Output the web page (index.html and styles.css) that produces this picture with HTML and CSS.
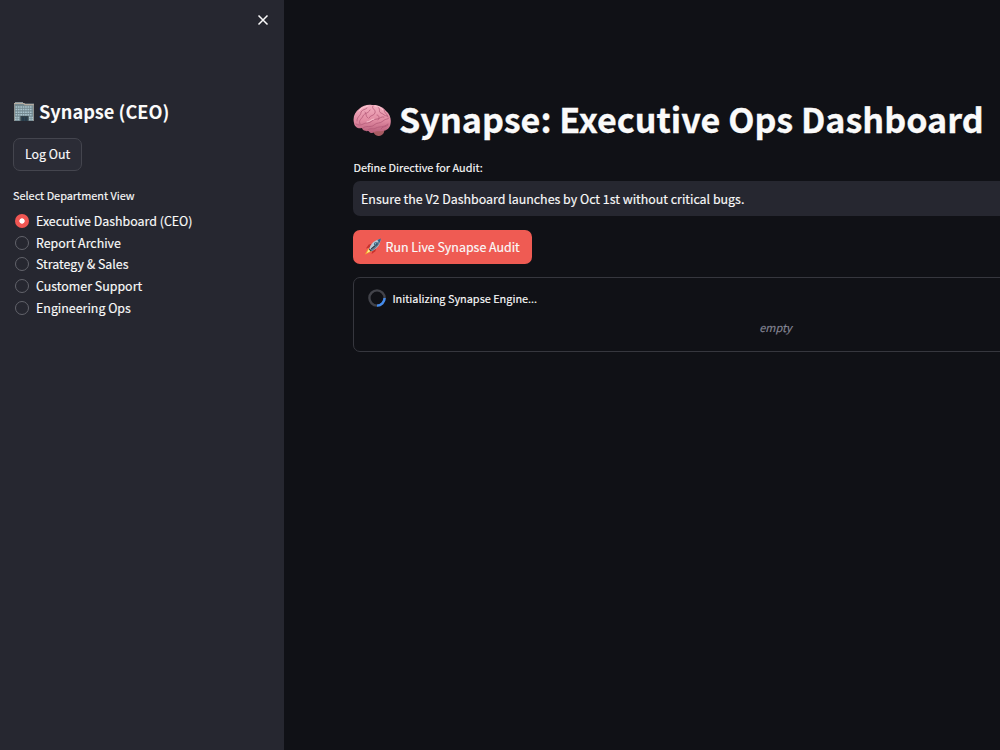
FILE: index.html
```html
<!DOCTYPE html>
<html lang="en">
<head>
<meta charset="utf-8">
<title>Synapse: Executive Ops Dashboard</title>
<link rel="stylesheet" href="styles.css">
</head>
<body>
<div class="app">
  <aside class="sidebar">
    <div class="sidebar-top">
      <svg class="close" viewBox="0 0 12 12"><path d="M1.5 1.5l9 9M10.5 1.5l-9 9"/></svg>
    </div>
    <h2 class="brand">
      <svg class="building" viewBox="0 0 20 20">
        <path d="M1 1h8v3H1z" fill="#88959a"/>
        <path d="M0 2.5h20V20H0z" fill="#748990"/>
        <path d="M0 2.5h10l1 1.2h9" fill="none" stroke="#b5aca1" stroke-width="1.2"/>
        <path d="M1.5 6h17M1.5 8.6h17M1.5 11.2h17M1.5 13.8h17M1 16.4h5M15 16.4h4M1 18.5h5M15 18.5h4" stroke="#a9c3cc" stroke-width="1.5" stroke-dasharray="1.7 .7"/>
        <path d="M6.5 15h8v5h-8z" fill="#34434b"/>
        <path d="M8.2 16.2h1.8V20H8.2zM11 16.2h1.8V20H11z" fill="#253b4b"/>
        <path d="M.4 3v17M19.6 3.5V20" stroke="#9b968e" stroke-width=".8"/>
      </svg>
      <span class="brand-text">Synapse (CEO)</span>
    </h2>
    <button class="btn logout"><span>Log Out</span></button>
    <div class="label view-label"><span class="view-text">Select Department View</span></div>
    <ul class="radios">
      <li class="radio"><i class="dot on"></i><span>Executive Dashboard (CEO)</span></li>
      <li class="radio"><i class="dot"></i><span>Report Archive</span></li>
      <li class="radio"><i class="dot"></i><span>Strategy &amp; Sales</span></li>
      <li class="radio"><i class="dot"></i><span>Customer Support</span></li>
      <li class="radio"><i class="dot"></i><span>Engineering Ops</span></li>
    </ul>
  </aside>
  <main class="main">
    <h1 class="title">
      <svg class="brain" viewBox="0 0 38 33">
        <defs>
          <linearGradient id="pink" x1="0" y1="0" x2="0" y2="1"><stop offset="0" stop-color="#f3afc0"/><stop offset=".55" stop-color="#e18ba2"/><stop offset="1" stop-color="#b95f7b"/></linearGradient>
        </defs>
        <path d="M21 25c2-2 9-2 10 .5 1 3-1.500 6-5 6.500-4 .3-7-4-5-7z" fill="#a85b62"/>
        <path d="M1 19C-.5 13 2 8 6 5 10 1 15 .5 19 1c6-.5 11 2 14 6 4 3 5.500 8 4.500 13-.5 4-4 7-8 7-3 1-6-.5-8 1-2 2-5 1-6-1-4 .5-6-1-6.500-3C5 25 1.500 23 1 19z" fill="url(#pink)"/>
        <g class="folds">
          <path d="M4 17c0-5 4-5 4-9 2-3 4-2 6-4M7 20c-2-4 2-5 3-8s5-2 7-6M3 20c5 3 7-1 11-1 5 0 5-4 10-4 3 0 4-3 7-2M10 24c3-3 8 0 11-3s6-1 9-4 5-1 6-3M20 2c-2 3 3 3 2 7-1 3-5 2-6 5M25 3c3 2 0 5 3 6s3 3 6 3M14 27c2-4 6-1 9-3 4-2 7 0 12-4M31 6c0 3 3 3 4 7M12 8c2 2 0 4 3 6M24 11c2 0 3 3 1 5M28 25c1-3 4-1 7-4"/>
        </g>
        <path d="M6 7c3-4 6-4 9-5M22 2c4 0 6 2 8 4M14 18c3 0 4-3 7-3" fill="none" stroke="#ffd0d9" stroke-width=".8" stroke-linecap="round"/>
      </svg>
      <span class="title-text">Synapse: Executive Ops Dashboard</span>
    </h1>
    <div class="label directive-label"><span class="directive-text">Define Directive for Audit:</span></div>
    <div class="field"><span>Ensure the V2 Dashboard launches by Oct 1st without critical bugs.</span></div>
    <button class="btn run">
      <svg class="rocket" viewBox="0 0 18 18">
        <path d="M5 10L1 11l3-4 4-1zM8 13l-1 4 4-3 1-4z" fill="#c7302c"/>
        <path d="M3.500 11L0 17.500 7 14z" fill="#f8b52d"/>
        <path d="M4 12l-2 4 3.500-2z" fill="#fff09a"/>
        <path d="M4.500 11.500C6 6 10 2 16.500 1c0 6-4 11-10 13z" fill="#b7c9d5"/>
        <path d="M6.500 14C11 12 16 7 16.500 1L5.500 12.500z" fill="#667d91"/>
        <path d="M13 2.200L16.800.5 15.700 5z" fill="#2d648d"/>
        <circle cx="11.500" cy="6.300" r="1.900" fill="#25475f"/><circle cx="11.200" cy="6" r=".9" fill="#71b0d2"/>
        <path d="M4.500 11.500l2 2.500M6.500 11.500l4-3" stroke="#303c47" stroke-width="1.100"/>
      </svg>
      <span class="run-text">Run Live Synapse Audit</span>
    </button>
    <section class="status">
      <div class="status-head">
        <svg class="spinner" viewBox="0 0 18 18"><circle cx="9" cy="9" r="7.600"/><path d="M16.600 9A7.600 7.600 0 0 1 9 16.600"/></svg>
        <span class="status-text">Initializing Synapse Engine...</span>
      </div>
      <div class="empty"><em>empty</em></div>
    </section>
  </main>
</div>
</body>
</html>
```
FILE: styles.css
```css
* { box-sizing: border-box; }
body { margin: 0; background: #101116; color: #fafafa; font-family: "Noto Sans CJK SC", sans-serif; font-size: 12.42px; overflow: hidden; -webkit-text-stroke: .15px currentColor; }
.app { display: flex; width: 1000px; height: 750px; overflow: hidden; }
.app span, .app em { white-space: nowrap; }
.sidebar { width: 284px; flex: none; background: #262730; padding: 0 13px; }
.sidebar-top { height: 98px; display: flex; justify-content: flex-end; padding: 14px 2px 0 0; }
.close { width: 12px; height: 12px; fill: none; stroke: #fafafa; stroke-width: 1.5; }
.brand { display: flex; align-items: center; gap: 5px; margin: 0; padding-left: 1px; height: 26px; font-size: 18.2px; font-weight: 700; -webkit-text-stroke: 0; }
.building { width: 20px; height: 20px; flex: none; }
.btn { display: flex; align-items: center; height: 34px; border-radius: 7px; font: inherit; color: #fafafa; padding: 0 11px; }
.logout { margin-top: 14px; width: 69px; height: 33px; padding-bottom: 1.5px; background: #2b2c36; border: 1px solid #44454e; }
.label { font-size: 10.9px; line-height: 16px; }
.view-label { margin-top: 16px; }
.radios { list-style: none; margin: 7px 0 0; padding: 0 0 0 2px; }
.radio { display: flex; align-items: center; gap: 7px; height: 21.7px; }
.dot { width: 14px; height: 14px; flex: none; border-radius: 50%; border: 1px solid #62636b; }
.dot.on { border: 0; background: radial-gradient(circle, #fff 0 2.3px, #f05653 3px); }
.main { flex: none; width: 914px; padding: 95px 69px 0; }
.title { display: flex; align-items: center; gap: 8px; height: 50px; margin: 0; font-size: 34.13px; font-weight: 700; -webkit-text-stroke: .3px currentColor; }
.title-text { margin-top: -4px; }
.brain { width: 38px; height: 33px; flex: none; }
.folds { fill: none; stroke: #b45b78; stroke-width: .8; stroke-linecap: round; }
.directive-label { margin-top: 14px; }
.directive-label { margin-left: .4px; }
.field { display: flex; align-items: center; height: 35px; margin-top: 6px; width: 845px; padding-left: 8px; background: #262730; border-radius: 7px; }
.run { margin-top: 14px; width: 179px; border: 0; background: #ef5b53; padding: 0 0 1px 12px; gap: 3.5px; }
.rocket { width: 17px; height: 17px; flex: none; }
.status { margin-top: 13px; width: 845px; height: 75px; border: 1px solid #36373e; border-radius: 7px; padding: 9px 14px; }
.status-head { display: flex; align-items: center; gap: 6.4px; height: 22px; font-size: 10.9px; }
.spinner { width: 18px; height: 18px; fill: none; stroke-width: 2.4; }
.spinner circle { stroke: #42434a; }
.spinner path { stroke: #438bed; }
.empty { display: flex; justify-content: center; height: 36px; align-items: center; font-size: 10.9px; color: #858694; }
```
